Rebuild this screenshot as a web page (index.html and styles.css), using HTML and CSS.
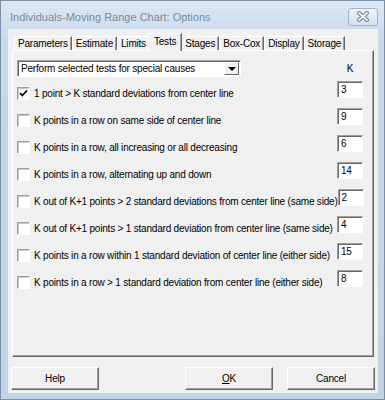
FILE: index.html
```html
<!DOCTYPE html>
<html lang="en">
<head>
    <meta charset="UTF-8">
    <title>Individuals-Moving Range Chart: Options</title>
    <link rel="stylesheet" href="styles.css">
</head>
<body>
    <div class="window">
        <div class="titlebar">
            <span class="title">Individuals-Moving Range Chart: Options</span>
            <span class="close">
                <svg width="30" height="18" viewBox="0 0 30 18">
                    <path d="M11 5 L19 12 M19 5 L11 12" stroke="#6f7c8a" stroke-width="4" stroke-linecap="round"/>
                    <path d="M11 5 L19 12 M19 5 L11 12" stroke="#f4f6f9" stroke-width="2" stroke-linecap="round"/>
                </svg>
            </span>
        </div>
        <div class="client">
            <div class="tabs">
                <span class="tab">Parameters</span>
                <span class="tab">Estimate</span>
                <span class="tab">Limits</span>
                <span class="tab active">Tests</span>
                <span class="tab">Stages</span>
                <span class="tab">Box-Cox</span>
                <span class="tab">Display</span>
                <span class="tab">Storage</span>
            </div>
            <div class="panel">
                <div class="head">
                    <div class="combo">
                        <span class="combo-text">Perform selected tests for special causes</span>
                        <span class="arrow"></span>
                    </div>
                    <span class="klabel">K</span>
                </div>
                <div class="tests">
                    <div class="row">
                        <span class="check">
                            <svg width="11" height="11" viewBox="0 0 11 11"><path d="M2 5 L4.3 7.5 L9 2.5" fill="none" stroke="#000" stroke-width="1.7"/></svg>
                        </span>
                        <span class="label">1 point &gt; K standard deviations from center line</span>
                        <span class="field">3</span>
                    </div>
                    <div class="row">
                        <span class="check"></span>
                        <span class="label">K points in a row on same side of center line</span>
                        <span class="field">9</span>
                    </div>
                    <div class="row">
                        <span class="check"></span>
                        <span class="label">K points in a row, all increasing or all decreasing</span>
                        <span class="field">6</span>
                    </div>
                    <div class="row">
                        <span class="check"></span>
                        <span class="label">K points in a row, alternating up and down</span>
                        <span class="field">14</span>
                    </div>
                    <div class="row">
                        <span class="check"></span>
                        <span class="label">K out of K+1 points &gt; 2 standard deviations from center line (same side)</span>
                        <span class="field">2</span>
                    </div>
                    <div class="row">
                        <span class="check"></span>
                        <span class="label">K out of K+1 points &gt; 1 standard deviation from center line (same side)</span>
                        <span class="field">4</span>
                    </div>
                    <div class="row">
                        <span class="check"></span>
                        <span class="label">K points in a row within 1 standard deviation of center line (either side)</span>
                        <span class="field">15</span>
                    </div>
                    <div class="row">
                        <span class="check"></span>
                        <span class="label">K points in a row &gt; 1 standard deviation from center line (either side)</span>
                        <span class="field">8</span>
                    </div>
                </div>
            </div>
            <div class="buttons">
                <span class="btn">Help</span>
                <span class="btn ok"><u>O</u>K</span>
                <span class="btn">Cancel</span>
            </div>
        </div>
    </div>
</body>
</html>
```

FILE: styles.css
```css
body {
    margin: 0;
    font-family: 'Liberation Sans', Arial, sans-serif;
    background: #ffffff;
}
.window {
    width: 385px;
    height: 400px;
    box-sizing: border-box;
    border: 1px solid #7d8fa4;
    background: linear-gradient(#dce7f4, #c8d8eb 40px, #c2d3e7);
    display: flex;
    flex-direction: column;
}
.titlebar {
    height: 28px;
    flex: none;
    display: flex;
    align-items: center;
    justify-content: space-between;
    padding: 3px 6px 0 9px;
    box-sizing: border-box;
}
.title {
    font-size: 11px;
    color: #7a8a9c;
}
.close {
    align-self: flex-start;
    margin-top: 4px;
    width: 30px;
    height: 18px;
    box-sizing: border-box;
    border: 1px solid #a3b2c4;
    border-radius: 3px;
    background: linear-gradient(#eef3f9, #d6e1ee);
    display: flex;
}
.close svg {
    margin: -1px;
}
.client {
    flex: none;
    height: 364px;
    margin: 0 6px 6px 7px;
    background: #f0f0f0;
    font-size: 10px;
    letter-spacing: -0.2px;
    color: #000;
}
.tabs {
    height: 21px;
    display: flex;
    align-items: flex-end;
    padding-left: 6px;
}
.tab {
    height: 14px;
    box-sizing: border-box;
    padding: 0 3px;
    border-left: 1px solid #ffffff;
    border-top: 1px solid #ffffff;
    border-right: 1px solid #696969;
    box-shadow: inset -1px 0 0 #a0a0a0;
    display: flex;
    align-items: center;
}
.tab.active {
    height: 18px;
    margin: 0 -1px -1px -2px;
    padding: 0 5px 3px 5px;
    background: #f0f0f0;
    position: relative;
    z-index: 1;
}
.panel {
    height: 307px;
    margin: 0 4px;
    box-sizing: border-box;
    padding: 9px 10px 0 4px;
    border-top: 1px solid #ffffff;
    border-left: 1px solid #ffffff;
    border-right: 1px solid #696969;
    border-bottom: 1px solid #696969;
    box-shadow: inset -1px -1px 0 #a0a0a0;
}
.head {
    display: flex;
    align-items: center;
    margin-bottom: 4px;
}
.combo {
    width: 224px;
    height: 17px;
    box-sizing: border-box;
    background: #fff;
    border: 1px solid;
    border-color: #a0a0a0 #ffffff #ffffff #a0a0a0;
    box-shadow: inset 1px 1px 0 #696969;
    display: flex;
    align-items: center;
    justify-content: space-between;
}
.combo-text {
    padding-left: 3px;
}
.arrow {
    width: 15px;
    height: 13px;
    margin-right: 1px;
    box-sizing: border-box;
    background: #f0f0f0;
    border: 1px solid;
    border-color: #ffffff #696969 #696969 #ffffff;
    display: flex;
    align-items: center;
    justify-content: center;
}
.arrow::after {
    content: "";
    border-left: 4px solid transparent;
    border-right: 4px solid transparent;
    border-top: 4px solid #000;
}
.klabel {
    margin-left: auto;
    width: 26px;
    text-align: center;
}
.tests {
    display: flex;
    flex-direction: column;
    gap: 3px;
}
.row {
    height: 24px;
    display: flex;
    align-items: center;
}
.check {
    width: 13px;
    height: 13px;
    flex: none;
    box-sizing: border-box;
    background: #fff;
    border: 1px solid;
    border-color: #a0a0a0 #ffffff #ffffff #a0a0a0;
    box-shadow: inset 1px 1px 0 #c8c8c8;
    display: flex;
}
.label {
    margin-left: 4px;
    white-space: nowrap;
}
.field {
    margin-left: auto;
    align-self: flex-start;
    width: 26px;
    height: 17px;
    flex: none;
    box-sizing: border-box;
    background: #fff;
    border: 1px solid;
    border-color: #a0a0a0 #ffffff #ffffff #a0a0a0;
    box-shadow: inset 1px 1px 0 #696969;
    padding: 2px 0 0 3px;
}
.buttons {
    display: flex;
    gap: 14px;
    margin-top: 10px;
    padding: 0 3px;
}
.btn {
    width: 88px;
    height: 23px;
    box-sizing: border-box;
    background: #f0f0f0;
    border: 1px solid;
    border-color: #ffffff #696969 #696969 #ffffff;
    box-shadow: inset -1px -1px 0 #a0a0a0;
    display: flex;
    align-items: center;
    justify-content: center;
}
.btn.ok {
    margin-left: auto;
}
```
